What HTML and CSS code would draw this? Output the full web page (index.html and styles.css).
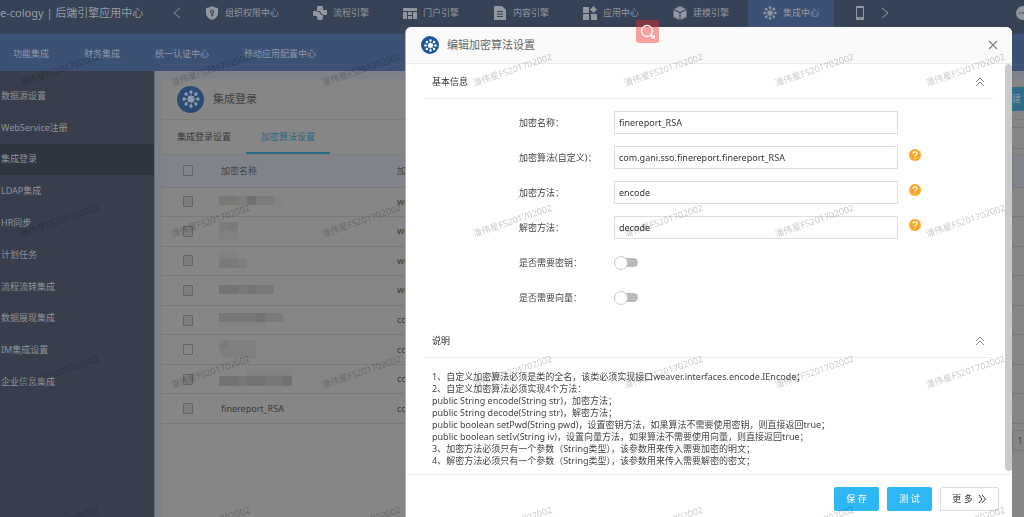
FILE: index.html
```html
<!DOCTYPE html>
<html lang="zh-CN">
<head>
<meta charset="utf-8">
<title>后端引擎应用中心</title>
<link rel="stylesheet" href="styles.css">
</head>
<body>
<svg class="defs" aria-hidden="true">
  <symbol id="hub" viewBox="0 0 16 16">
    <circle cx="8" cy="8" r="3" fill="currentColor"/>
    <path d="M8 1.500V14.500M1.500 8H14.500M3.400 3.400L12.600 12.600M12.600 3.400L3.400 12.600" stroke="currentColor" stroke-width=".6"/>
    <g fill="currentColor"><circle cx="8" cy="1.800" r="1.500"/><circle cx="8" cy="14.200" r="1.500"/><circle cx="1.800" cy="8" r="1.500"/><circle cx="14.200" cy="8" r="1.500"/><circle cx="3.600" cy="3.600" r="1.500"/><circle cx="12.400" cy="12.400" r="1.500"/><circle cx="12.400" cy="3.600" r="1.500"/><circle cx="3.600" cy="12.400" r="1.500"/></g>
  </symbol>
  <symbol id="fold" viewBox="0 0 10 10"><path d="M1 5L5 1L9 5M1 9L5 5L9 9" fill="none" stroke="currentColor"/></symbol>
</svg>
<header class="top">
  <div class="brand">e-cology | 后端引擎应用中心</div>
  <button class="arrow" aria-label="向左"><svg viewBox="0 0 8 12"><path d="M7 1L1 6L7 11" fill="none" stroke="currentColor"/></svg></button>
  <nav class="engines">
    <a href="#"><svg viewBox="0 0 14 14"><path fill="currentColor" fill-rule="evenodd" d="M7 0Q10 2 13 2V7Q13 12 7 14Q1 12 1 7V2Q4 2 7 0ZM7 3.500A2 2 0 0 0 6.400 7.400V10.500H7.600V9.500H8.600V8.500H7.600V7.400A2 2 0 0 0 7 3.500ZM7 4.500A1 1 0 1 1 7 6.500A1 1 0 0 1 7 4.500Z"/></svg>组织权限中心</a>
    <a href="#"><svg viewBox="0 0 14 14"><path fill="currentColor" d="M5 0H9Q10 0 10 1V4H13Q14 4 14 5V8Q14 9 13 9H10V12Q10 14 8 14H6Q4 14 4 12V10H1Q0 10 0 9V6Q0 5 1 5H4V1Q4 0 5 0Z"/><path class="cut" d="M4 5.500H6Q7.500 5.500 7.500 7T9 8.700H10"/></svg>流程引擎</a>
    <a href="#"><svg viewBox="0 0 14 14"><path fill="currentColor" d="M0 2H14V5H0ZM0 6H4V13H0ZM5 6H9V9H5ZM5 10H9V13H5ZM10 6H14V13H10Z"/></svg>门户引擎</a>
    <a href="#"><svg viewBox="0 0 14 14"><path fill="currentColor" d="M2 0H9L13 4V14H1V1Q1 0 2 0Z"/><path class="cut" d="M4 5.500H10M4 8H10M4 10.500H10"/></svg>内容引擎</a>
    <a href="#"><svg viewBox="0 0 14 14"><path fill="currentColor" d="M0 1H6V7H0ZM0 8H6V14H0ZM8 8H14V14H8ZM10.500 0L14 3.500L10.500 7L7 3.500Z"/></svg>应用中心</a>
    <a href="#"><svg viewBox="0 0 14 14"><path fill="currentColor" d="M7 0L13 3L7 6L1 3ZM.500 4L6.500 7V14L.500 11ZM13.500 4L7.500 7V14L13.500 11Z"/></svg>建模引擎</a>
    <a href="#" class="on"><svg><use href="#hub"/></svg>集成中心</a>
  </nav>
  <button class="phone" aria-label="移动"><svg viewBox="0 0 10 14"><path fill="currentColor" fill-rule="evenodd" d="M2 0H8Q9 0 9 1V13Q9 14 8 14H2Q1 14 1 13V1Q1 0 2 0ZM2 2V11H8V2ZM4.500 12V13H5.500V12Z"/></svg></button>
  <button class="arrow" aria-label="向右"><svg viewBox="0 0 8 12"><path d="M1 1L7 6L1 11" fill="none" stroke="currentColor"/></svg></button>
  <button class="chat" aria-label="消息"><svg viewBox="0 0 14 14"><circle cx="7" cy="7" r="7" fill="currentColor"/><path class="cut" d="M3 7H5M6 7H8M9 7H11"/></svg></button>
</header>
<nav class="sub"><a href="#">功能集成</a><a href="#">财务集成</a><a href="#">统一认证中心</a><a href="#">移动应用配置中心</a></nav>
<div class="shell">
  <aside class="side">
    <nav class="side-list"><a href="#">数据源设置</a><a href="#">WebService注册</a><a href="#" class="on">集成登录</a><a href="#">LDAP集成</a><a href="#">HR同步</a><a href="#">计划任务</a><a href="#">流程流转集成</a><a href="#">数据展现集成</a><a href="#">IM集成设置</a><a href="#">企业信息集成</a></nav>
  </aside>
  <main class="card">
    <div class="card-head"><span class="disc"><svg><use href="#hub"/></svg></span><h1>集成登录</h1><button class="new">新建</button></div>
    <div class="tabs"><button>集成登录设置</button><button class="on">加密算法设置</button><input class="search" aria-label="搜索"></div>
    <table>
      <thead><tr><th class="pick"><input type="checkbox" aria-label="全选"></th><th class="name">加密名称</th><th>加密算法</th></tr></thead>
      <tbody>
        <tr><td class="pick"><input type="checkbox" class="dim" aria-label="选择"></td><td><svg class="mosaic" viewBox="0 0 82 20"><path fill="#797874" d="M0 4h19v9H0z"/><path fill="#7b7e7b" d="M19 4h9v9h-9z"/><path fill="#72706e" d="M28 4h9v9h-9z"/><path fill="#797c7b" d="M37 4h18v9H37z"/><path fill="#808584" d="M55 4h9v9h-9zM19 13h9v5h-9z"/></svg></td><td>weaver</td></tr>
        <tr><td class="pick"><input type="checkbox" class="dim" aria-label="选择"></td><td><svg class="mosaic" viewBox="0 0 82 20"><path fill="#7d7d7d" d="M0 1h19v9H0z"/><path fill="#7a7a7a" d="M9 1h10v9H9z"/><path fill="#818181" d="M0 10h19v9H0z"/></svg></td><td>weaver</td></tr>
        <tr><td class="pick"><input type="checkbox" class="dim" aria-label="选择"></td><td><svg class="mosaic" viewBox="0 0 82 20"><path fill="#828282" d="M0 0h19v8H0z"/><path fill="#7a7a7a" d="M0 8h19v9H0z"/><path fill="#7e7e7e" d="M19 8h9v9h-9z"/></svg></td><td>weaver</td></tr>
        <tr><td class="pick"><input type="checkbox" class="dim" aria-label="选择"></td><td><svg class="mosaic" viewBox="0 0 82 20"><path fill="#757372" d="M0 5h28v9H0z"/><path fill="#797877" d="M19 5h9v9h-9zM37 5h18v9H37z"/><path fill="#747272" d="M28 5h9v9h-9z"/></svg></td><td>weaver</td></tr>
        <tr><td class="pick"><input type="checkbox" class="dim" aria-label="选择"></td><td><svg class="mosaic" viewBox="0 0 82 20"><path fill="#777676" d="M0 3h37v9H0z"/><path fill="#737373" d="M37 3h9v9h-9z"/><path fill="#7a7a7a" d="M46 3h18v9H46z"/><path fill="#828282" d="M0 12h46v5H0z"/></svg></td><td>com</td></tr>
        <tr><td class="pick"><input type="checkbox" aria-label="选择"></td><td><svg class="mosaic" viewBox="0 0 82 20"><path fill="#7a7c7b" d="M4 0h6v9H0V4z"/><path fill="#7f8180" d="M10 0h27v9H10z"/><path fill="#7e7f7f" d="M0 9h37v9H4z"/></svg></td><td>com</td></tr>
        <tr><td class="pick"><input type="checkbox" class="dim" aria-label="选择"></td><td><svg class="mosaic" viewBox="0 0 82 20"><path fill="#818181" d="M28 0h45v7H28z"/><path fill="#737373" d="M0 7h46v10H0z"/><path fill="#777" d="M19 7h9v10h-9zM46 7h18v10H46z"/><path fill="#717171" d="M64 7h9v10h-9z"/></svg></td><td>com</td></tr>
        <tr><td class="pick"><input type="checkbox" class="dim" aria-label="选择"></td><td>finereport_RSA</td><td>com</td></tr>
      </tbody>
    </table>
    <div class="pager"><button>1</button></div>
  </main>
</div>

<section class="dialog" role="dialog" aria-labelledby="dlg-title">
  <header class="dlg-head"><span class="disc small"><svg><use href="#hub"/></svg></span><h2 id="dlg-title">编辑加密算法设置</h2><button class="close" aria-label="关闭"><svg viewBox="0 0 10 10"><path d="M1 1L9 9M9 1L1 9" stroke="currentColor" stroke-width="1.300"/></svg></button></header>
  <div class="dlg-body">
    <div class="content">
      <div class="sec-head"><h3>基本信息</h3><button aria-label="收起"><svg><use href="#fold"/></svg></button></div>
      <form class="form">
        <div class="field"><label for="f1">加密名称：</label><input id="f1" type="text" value="finereport_RSA"></div>
        <div class="field"><label for="f2">加密算法(自定义)：</label><input id="f2" type="text" value="com.gani.sso.finereport.finereport_RSA"><button type="button" class="help" aria-label="帮助"><svg viewBox="0 0 12 12"><path d="M4 4.600Q4 2.800 6 2.800T8 4.500Q8 5.500 6.800 6Q6 6.400 6 7.400M6 8.400V9.600" fill="none" stroke="#fff" stroke-width="1.200"/></svg></button></div>
        <div class="field"><label for="f3">加密方法：</label><input id="f3" type="text" value="encode"><button type="button" class="help" aria-label="帮助"><svg viewBox="0 0 12 12"><path d="M4 4.600Q4 2.800 6 2.800T8 4.500Q8 5.500 6.800 6Q6 6.400 6 7.400M6 8.400V9.600" fill="none" stroke="#fff" stroke-width="1.200"/></svg></button></div>
        <div class="field"><label for="f4">解密方法：</label><input id="f4" type="text" value="decode"><button type="button" class="help" aria-label="帮助"><svg viewBox="0 0 12 12"><path d="M4 4.600Q4 2.800 6 2.800T8 4.500Q8 5.500 6.800 6Q6 6.400 6 7.400M6 8.400V9.600" fill="none" stroke="#fff" stroke-width="1.200"/></svg></button></div>
        <div class="field"><label for="f5">是否需要密钥：</label><input id="f5" type="checkbox" class="switch"></div>
        <div class="field"><label for="f6">是否需要向量：</label><input id="f6" type="checkbox" class="switch"></div>
      </form>
      <div class="sec-head"><h3>说明</h3><button aria-label="收起"><svg><use href="#fold"/></svg></button></div>
      <div class="notes">
        <p>1、自定义加密算法必须是类的全名，该类必须实现接口weaver.interfaces.encode.IEncode；</p>
        <p>2、自定义加密算法必须实现4个方法：</p>
        <p>public String encode(String str)，加密方法；</p>
        <p>public String decode(String str)，解密方法；</p>
        <p>public boolean setPwd(String pwd)，设置密钥方法，如果算法不需要使用密钥，则直接返回true；</p>
        <p>public boolean setIv(String iv)，设置向量方法，如果算法不需要使用向量，则直接返回true；</p>
        <p>3、加密方法必须只有一个参数（String类型），该参数用来传入需要加密的明文；</p>
        <p>4、解密方法必须只有一个参数（String类型），该参数用来传入需要解密的密文；</p>
      </div>
    </div>
    <div class="scroll"></div>
  </div>
  <footer class="dlg-foot"><button class="primary">保 存</button><button class="primary">测 试</button><button class="more">更 多<svg viewBox="0 0 9 10"><path d="M1 1L4 5L1 9M4 1L7.500 5L4 9" fill="none" stroke="currentColor"/></svg></button></footer>
</section>

<button class="lens" aria-label="搜索"><svg viewBox="0 0 16 16"><g fill="none" stroke="#fff" stroke-width="1.300"><circle cx="7" cy="7" r="5.500"/><path d="M11 11L12 12"/><circle cx="13" cy="13" r="1.400"/></g></svg></button>
<div class="marks" aria-hidden="true">
  <span>潘伟星FS201702002</span><span>潘伟星FS201702002</span><span>潘伟星FS201702002</span><span>潘伟星FS201702002</span><span>潘伟星FS201702002</span><span>潘伟星FS201702002</span><span>潘伟星FS201702002</span>
  <span>潘伟星FS201702002</span><span>潘伟星FS201702002</span><span>潘伟星FS201702002</span><span>潘伟星FS201702002</span><span>潘伟星FS201702002</span><span>潘伟星FS201702002</span><span>潘伟星FS201702002</span>
  <span>潘伟星FS201702002</span><span>潘伟星FS201702002</span><span>潘伟星FS201702002</span><span>潘伟星FS201702002</span><span>潘伟星FS201702002</span><span>潘伟星FS201702002</span><span>潘伟星FS201702002</span>
  <span>潘伟星FS201702002</span><span>潘伟星FS201702002</span><span>潘伟星FS201702002</span><span>潘伟星FS201702002</span><span>潘伟星FS201702002</span><span>潘伟星FS201702002</span><span>潘伟星FS201702002</span>
</div>
</body>
</html>
```
FILE: styles.css
```css
* { box-sizing: border-box; }
body {
  margin: 0;
  height: 100vh;
  overflow: hidden;
  display: flex;
  flex-direction: column;
  background: #7e808a;
  color: #3a3a3a;
  font: 9px/12px "Noto Sans", "Noto Sans CJK SC", sans-serif;
}
h1, h2, h3, p { margin: 0; font-weight: 400; }
a { color: inherit; text-decoration: none; }
button { padding: 0; border: 0; background: none; color: inherit; font: inherit; }
input { font: inherit; margin: 0; }
svg { display: block; flex: none; }
.defs { position: absolute; width: 0; height: 0; }

.top { display: flex; align-items: center; height: 34px; flex: none; background: #364256; color: #92979f; }
.top > * { padding-bottom: 8px; }
.brand { width: 173px; flex: none; font-size: 11px; white-space: nowrap; color: #979ca3; }
.arrow svg { width: 8px; height: 12px; }
.top .engines { display: flex; gap: 4px; height: 34px; margin-left: 9px; padding: 0; }
.engines a { display: flex; align-items: center; gap: 6px; padding: 0 15px 8px; white-space: nowrap; }
.engines svg { width: 14px; height: 14px; }
.engines .on { background: #3c5174; }
.phone { margin: 0 16px 0 21px; }
.phone svg { width: 10px; height: 14px; }
.chat { margin-left: auto; margin-right: -6px; }
.chat svg { width: 14px; height: 14px; }
.cut { fill: none; stroke: #364256; stroke-width: 1; }

.sub { display: flex; align-items: center; gap: 35px; height: 37px; flex: none; padding: 2px 0 0 13px; background: #3c5174; color: #8f98a5; }

.shell { display: flex; flex: 1; min-height: 0; }
.side { width: 155px; flex: none; padding-top: 9px; background: #383e4c; border-right: 1px solid #666b77; color: #8f9299; }
.side-list { display: flex; flex-direction: column; height: 318px; }
.side-list a { flex: 1; display: flex; align-items: center; padding-left: 1px; }
.side-list .on { background: #303542; }

.card { flex: 1; min-width: 0; margin: 8px 0 0 7px; background: #868686; overflow: hidden; }
.card-head { display: flex; align-items: center; height: 41px; padding-left: 15px; border-bottom: 1px solid #7d7d7d; }
.disc { display: grid; place-items: center; width: 27px; height: 27px; border-radius: 50%; background: #2a4b73; color: #8f9dad; }
.disc svg { width: 18px; height: 18px; }
.card h1 { margin-left: 9px; font-size: 11px; color: #404040; }
.new { margin-left: auto; height: 24px; padding: 0 3px 0 12px; background: #2f6d87; color: #8c9ca4; }
.tabs { display: flex; height: 35px; border-bottom: 1px solid #7d7d7d; }
.tabs button { padding: 2px 15px 0; border-bottom: 2px solid transparent; }
.tabs .on { color: #2c6784; border-color: #2c6b8a; }
.search { width: 120px; height: 22px; margin: 7px 0 0 auto; background: none; border: 1px solid #777; border-right: 0; }
table { width: 100%; height: 269px; border-collapse: collapse; table-layout: fixed; }
th, td { height: 29px; padding: 0; text-align: left; font-weight: 400; border-bottom: 1px solid #797979; }
th { height: 32px; background: #80848a; color: #414449; }
.pick { width: 59px; padding-left: 21px; }
.name { width: 176px; }
.pick input { appearance: none; display: block; width: 10px; height: 11px; border: 1px solid #646464; border-radius: 1px; }
.pick .dim { background: #7d7d7d; }
.mosaic { width: 82px; height: 20px; margin-left: -2px; }
.pager { display: flex; justify-content: flex-end; margin: 6px -4px 0 0; }
.pager button { width: 16px; height: 21px; border: 1px solid #777; border-radius: 3px; color: #444; }

.dialog {
  position: fixed;
  top: 27px;
  right: 12px;
  bottom: 0;
  left: 405px;
  display: flex;
  flex-direction: column;
  background: #fff;
  border-left: 1px solid #b0b0b0;
  border-radius: 6px 6px 0 0;
  overflow: hidden;
}
.dlg-head { display: flex; align-items: center; height: 37px; flex: none; padding: 0 14px 0 15px; background: #fafafa; border-bottom: 1px solid #eaeaea; }
.disc.small { width: 18px; height: 18px; background: #1a57a2; color: #fff; }
.small svg { width: 13px; height: 13px; }
.dlg-head h2 { margin-left: 8px; font-size: 11px; color: #666; }
.close { margin-left: auto; color: #858585; }
.close svg { width: 10px; height: 10px; }
.dlg-body { display: flex; height: 411px; flex: none; border-bottom: 1px solid #eee; }
.content { flex: 1; padding: 0 12px 0 18px; }
.scroll { width: 7px; height: 407px; border-radius: 4px; background: #cacaca; }
.sec-head { display: flex; align-items: center; justify-content: space-between; height: 35px; padding: 1px 8px 0; border-bottom: 1px solid #eee; }
.sec-head h3 { font-size: 9px; color: #333; }
.sec-head button { color: #8c8c8c; }
.sec-head svg { width: 10px; height: 10px; }
.form { padding: 6px 95px 8px; }
.field { display: flex; align-items: center; height: 35px; }
.field label { width: 95px; flex: none; white-space: nowrap; color: #444; }
.field input[type="text"] { flex: 1; min-width: 0; height: 23px; padding: 0 4px; border: 1px solid #ddd; background: #fff; color: #333; }
.help { width: 12px; height: 12px; margin: 0 -23px 5px 11px; border-radius: 50%; background: #fca728; flex: none; }
.help svg { width: 12px; height: 12px; }
.switch { appearance: none; position: relative; width: 24px; height: 9px; border-radius: 5px; background: #bababa; }
.switch::before { content: ""; position: absolute; left: 0; top: -2px; width: 12px; height: 12px; border: 1px solid #ccc; border-radius: 50%; background: #fff; }
.notes { padding: 13px 8px; line-height: 12px; color: #444; white-space: nowrap; }
.dlg-foot { display: flex; justify-content: flex-end; gap: 8px; padding: 12px 13px; }
.dlg-foot button { height: 24px; border-radius: 2px; }
.primary { width: 45px; background: #2db7f5; color: #fff; }
.dlg-foot .more { display: flex; align-items: center; justify-content: center; gap: 5px; width: 59px; border: 1px solid #ddd; color: #333; }
.more svg { width: 9px; height: 10px; }

.lens { position: fixed; top: 20px; left: 636px; display: grid; place-items: center; width: 23px; height: 23px; border-radius: 3px; background: rgba(240, 41, 41, .43); }
.lens svg { width: 16px; height: 16px; }
.marks { position: fixed; inset: 0; display: grid; grid-template-columns: repeat(7, 151px); grid-auto-rows: 151px; padding-left: 18px; overflow: hidden; pointer-events: none; color: rgba(0, 0, 0, .22); }
.marks span { align-self: start; justify-self: start; margin-top: 64px; transform: rotate(-19deg); }
```
